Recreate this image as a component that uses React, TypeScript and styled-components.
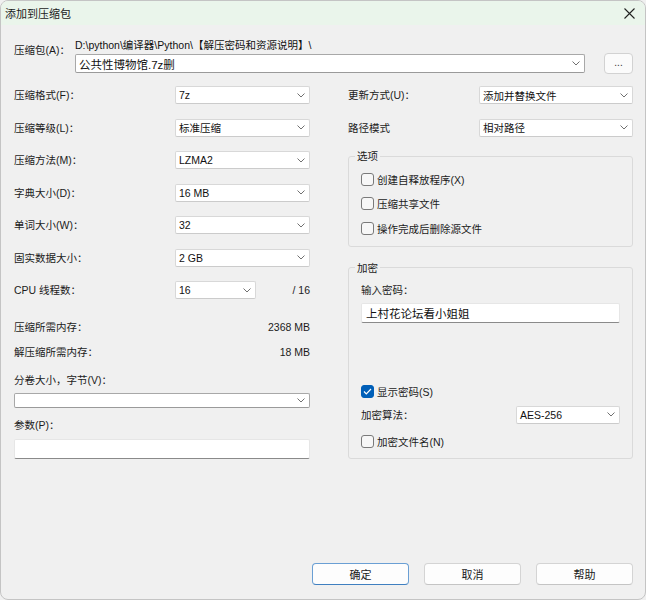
import React from "react";
import styled, { createGlobalStyle } from "styled-components";

const Global = createGlobalStyle`
  html, body { margin: 0; padding: 0; background: #f0f0f0; }
  body {
    font-family: "Liberation Sans", "Noto Sans CJK SC", sans-serif;
    font-size: 10.5px;
    color: #1b1b1b;
  }
`;

const Window = styled.div`
  width: 646px;
  height: 600px;
  box-sizing: border-box;
  background: #f0f0f0;
  border: 1px solid #c4c4c4;
  border-radius: 8px;
  display: flex;
  flex-direction: column;
  overflow: hidden;
`;

const TitleBar = styled.div`
  height: 24px;
  background: #eaf5eb;
  display: flex;
  align-items: center;
  justify-content: space-between;
  padding: 0 10px 0 4px;
  font-size: 11px;
  color: #1a1a1a;
`;

const Body = styled.div`
  flex: 1;
  display: flex;
  flex-direction: column;
  padding: 0 12px 14px 13px;
`;

const ArchiveRow = styled.div`
  display: flex;
  margin-top: 13px;
`;

const ArchiveLabel = styled.div`
  width: 61px;
  line-height: 14px;
  margin-top: 5px;
  white-space: nowrap;
`;

const ArchiveCol = styled.div`
  flex: 1;
  display: flex;
  flex-direction: column;
`;

const PathText = styled.div`
  line-height: 14px;
  height: 14px;
  color: #111;
  white-space: nowrap;
`;

const ComboLine = styled.div`
  display: flex;
  align-items: center;
  gap: 19px;
  margin-top: 1px;
`;

const SmallButton = styled.div`
  box-sizing: border-box;
  width: 29px;
  height: 21px;
  background: #fbfbfb;
  border: 1px solid #d2d2d2;
  border-radius: 4px;
  display: flex;
  align-items: center;
  justify-content: center;
  font-size: 10px;
  color: #333;
  padding-bottom: 3px;
`;

const Combo = styled.div<{ $w?: number; $h?: number; $editable?: boolean }>`
  box-sizing: border-box;
  width: ${(p) => (p.$w ? `${p.$w}px` : "100%")};
  flex: ${(p) => (p.$w ? "none" : "1")};
  height: ${(p) => p.$h ?? 18}px;
  background: #fff;
  border: 1px solid ${(p) => (p.$editable ? "#a8a8a8" : "#d8d8d8")};
  border-bottom-color: ${(p) => (p.$editable ? "#9a9a9a" : "#cbcbcb")};
  border-radius: 2px;
  display: flex;
  align-items: center;
  padding: 0 4px 0 3px;
`;

const ComboText = styled.span<{ $big?: boolean }>`
  flex: 1;
  white-space: nowrap;
  font-size: ${(p) => (p.$big ? "11.5px" : "10.5px")};
  color: #111;
`;

const Columns = styled.div`
  display: grid;
  grid-template-columns: 296px 285px;
  column-gap: 38px;
  margin-top: 5px;
`;

const LeftCol = styled.div`
  display: flex;
  flex-direction: column;
`;

const RightCol = styled.div`
  display: flex;
  flex-direction: column;
`;

const FormGrid = styled.div<{ $label: number }>`
  display: grid;
  grid-template-columns: ${(p) => p.$label}px 1fr;
  grid-auto-rows: 32.5px;
  align-items: center;
`;

const Label = styled.span`
  white-space: nowrap;
  line-height: 14px;
`;

const CpuCell = styled.div`
  display: flex;
  align-items: center;
`;

const CpuMax = styled.span`
  flex: 1;
  text-align: right;
`;

const MemRow = styled.div<{ $first?: boolean }>`
  display: flex;
  justify-content: space-between;
  align-items: center;
  height: 25px;
  margin-top: ${(p) => (p.$first ? "7.5px" : "0")};
`;

const BlockLabel = styled.div<{ $mt: number }>`
  line-height: 14px;
  margin-top: ${(p) => p.$mt}px;
  white-space: nowrap;
`;

const Spacer = styled.div<{ $h: number }>`
  height: ${(p) => p.$h}px;
`;

const TextInput = styled.div<{ $h?: number }>`
  box-sizing: border-box;
  height: ${(p) => p.$h ?? 20}px;
  background: #fff;
  border: 1px solid #e6e6e6;
  border-bottom: 1px solid #8a8a8a;
  border-radius: 2px;
  display: flex;
  align-items: center;
  padding-left: 4px;
  font-size: 11.5px;
  color: #111;
`;

const Group = styled.fieldset<{ $mt: number; $pb: number }>`
  margin: ${(p) => p.$mt}px 0 0 0;
  padding: 0 0 ${(p) => p.$pb}px 0;
  border: 1px solid #dadada;
  border-radius: 3px;
  min-width: 0;
  display: flex;
  flex-direction: column;
`;

const Legend = styled.legend`
  margin-left: 6px;
  padding: 0 2px;
  line-height: 14px;
  font-size: 10.5px;
`;

const CheckRow = styled.label<{ $h?: number; $mt?: number }>`
  display: flex;
  align-items: center;
  gap: 3px;
  height: ${(p) => p.$h ?? 24.5}px;
  margin-top: ${(p) => p.$mt ?? 0}px;
  padding-left: 12px;
  white-space: nowrap;
`;

const Box = styled.span<{ $checked?: boolean }>`
  box-sizing: border-box;
  width: 13px;
  height: 13px;
  border-radius: 3px;
  border: 1px solid ${(p) => (p.$checked ? "#005fb8" : "#7a7a7a")};
  background: ${(p) => (p.$checked ? "#005fb8" : "#f7f7f7")};
  display: flex;
  align-items: center;
  justify-content: center;
`;

const InnerBlock = styled.div<{ $mt: number }>`
  margin-top: ${(p) => p.$mt}px;
  padding: 0 12px;
`;

const AlgoRow = styled.div`
  display: flex;
  align-items: center;
  justify-content: space-between;
  height: 18px;
  margin-top: 7px;
  padding: 0 12px;
`;

const Footer = styled.div`
  margin-top: auto;
  display: flex;
  justify-content: flex-end;
  gap: 15px;
`;

const Button = styled.div<{ $primary?: boolean }>`
  box-sizing: border-box;
  width: 97px;
  height: 22px;
  background: #fdfdfd;
  border: 1px solid ${(p) => (p.$primary ? "#6a9fd4" : "#d4d4d4")};
  border-bottom-color: ${(p) => (p.$primary ? "#3f7fc0" : "#c4c4c4")};
  border-radius: 4px;
  display: flex;
  align-items: center;
  justify-content: center;
  font-size: 11px;
  color: #1a1a1a;
`;

const Chevron = () => (
  <svg width="8" height="5" viewBox="0 0 8 5" style={{ flex: "none" }}>
    <polyline points="0.5,0.5 4,4 7.5,0.5" fill="none" stroke="#707070" strokeWidth="1" />
  </svg>
);

const CloseIcon = () => (
  <svg width="11" height="11" viewBox="0 0 11 11">
    <path d="M0.5 0.5 L10.5 10.5 M10.5 0.5 L0.5 10.5" stroke="#222" strokeWidth="1.1" fill="none" />
  </svg>
);

const CheckMark = () => (
  <svg width="9" height="7" viewBox="0 0 9 7">
    <polyline points="1,3.5 3.3,5.8 8,1" fill="none" stroke="#fff" strokeWidth="1.2" />
  </svg>
);

const ComboBox: React.FC<{ text?: string; w?: number; h?: number; editable?: boolean; big?: boolean }> = ({
  text = "",
  w,
  h,
  editable,
  big,
}) => (
  <Combo $w={w} $h={h} $editable={editable}>
    <ComboText $big={big}>{text}</ComboText>
    <Chevron />
  </Combo>
);

const Check: React.FC<{ label: string; checked?: boolean; h?: number; mt?: number }> = ({ label, checked, h, mt }) => (
  <CheckRow $h={h} $mt={mt}>
    <Box $checked={checked}>{checked && <CheckMark />}</Box>
    <span>{label}</span>
  </CheckRow>
);

const leftRows: [string, string][] = [
  ["压缩格式(F)：", "7z"],
  ["压缩等级(L)：", "标准压缩"],
  ["压缩方法(M)：", "LZMA2"],
  ["字典大小(D)：", "16 MB"],
  ["单词大小(W)：", "32"],
  ["固实数据大小：", "2 GB"],
];

export default function App() {
  return (
    <>
      <Global />
      <Window>
        <TitleBar>
          <span>添加到压缩包</span>
          <CloseIcon />
        </TitleBar>
        <Body>
          <ArchiveRow>
            <ArchiveLabel>压缩包(A)：</ArchiveLabel>
            <ArchiveCol>
              <PathText>D:\python\编译器\Python\【解压密码和资源说明】\</PathText>
              <ComboLine>
                <ComboBox text="公共性博物馆.7z删" h={19} editable big />
                <SmallButton>...</SmallButton>
              </ComboLine>
            </ArchiveCol>
          </ArchiveRow>

          <Columns>
            <LeftCol>
              <FormGrid $label={161}>
                {leftRows.map(([l, v]) => (
                  <React.Fragment key={l}>
                    <Label>{l}</Label>
                    <ComboBox text={v} />
                  </React.Fragment>
                ))}
                <Label>CPU 线程数：</Label>
                <CpuCell>
                  <ComboBox text="16" w={81} />
                  <CpuMax>/ 16</CpuMax>
                </CpuCell>
              </FormGrid>
              <MemRow $first>
                <Label>压缩所需内存：</Label>
                <span>2368 MB</span>
              </MemRow>
              <MemRow>
                <Label>解压缩所需内存：</Label>
                <span>18 MB</span>
              </MemRow>
              <BlockLabel $mt={9}>分卷大小，字节(V)：</BlockLabel>
              <Spacer $h={6} />
              <ComboBox editable />
              <BlockLabel $mt={10}>参数(P)：</BlockLabel>
              <Spacer $h={7} />
              <TextInput />
            </LeftCol>

            <RightCol>
              <FormGrid $label={131}>
                <Label>更新方式(U)：</Label>
                <ComboBox text="添加并替换文件" />
                <Label>路径模式</Label>
                <ComboBox text="相对路径" />
              </FormGrid>

              <Group $mt={5} $pb={5}>
                <Legend>选项</Legend>
                <Spacer $h={4} />
                <Check label="创建自释放程序(X)" />
                <Check label="压缩共享文件" />
                <Check label="操作完成后删除源文件" />
              </Group>

              <Group $mt={14} $pb={9}>
                <Legend>加密</Legend>
                <BlockLabel $mt={8} style={{ paddingLeft: 12 }}>输入密码：</BlockLabel>
                <InnerBlock $mt={6}>
                  <TextInput>上村花论坛看小姐姐</TextInput>
                </InnerBlock>
                <Check label="显示密码(S)" checked h={14} mt={62} />
                <AlgoRow>
                  <Label>加密算法：</Label>
                  <ComboBox text="AES-256" w={104} />
                </AlgoRow>
                <Check label="加密文件名(N)" h={14} mt={11} />
              </Group>
            </RightCol>
          </Columns>

          <Footer>
            <Button $primary>确定</Button>
            <Button>取消</Button>
            <Button>帮助</Button>
          </Footer>
        </Body>
      </Window>
    </>
  );
}
